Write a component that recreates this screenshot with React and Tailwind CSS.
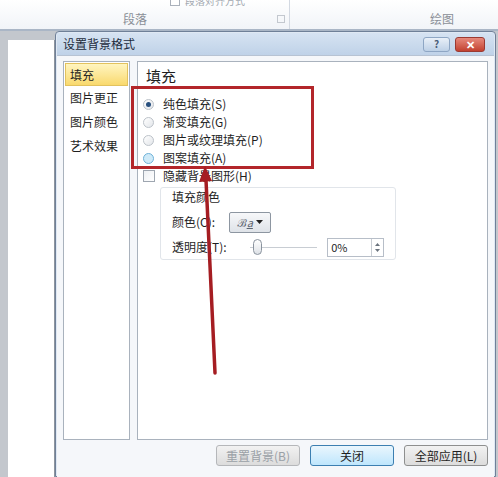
const font = { fontFamily: '"Noto Sans CJK SC", "Noto Sans", sans-serif' }

export default function App() {
  return (
    <div className="relative w-[498px] h-[477px] overflow-hidden bg-[#c3c7cd] text-[#1f1f1f]" style={font}>
      <Ribbon />
      <div className="flex h-[446px]">
        <div className="w-[55px] pl-[8px] pt-[9px]">
          <div className="h-full bg-white border-r border-[#8d949e]" />
        </div>
        <Dialog />
      </div>
      <Annotation />
    </div>
  )
}

function Ribbon() {
  return (
    <div className="flex h-[31px] bg-gradient-to-b from-white to-[#f1f4f8] border-b-2 border-[#aab6c6]">
      <div className="relative w-[290px] border-r border-[#d3d9e2]">
        <div className="absolute left-[170px] top-[-5px] flex items-center gap-[5px] text-[10px] leading-[12px] text-[#a3a9b1]">
          <span className="w-[10px] h-[10px] border border-[#aab1bb] bg-white" />
          <span>段落对齐方式</span>
        </div>
        <div className="flex items-center h-full pt-[8px]">
          <span className="ml-[123px] text-[12px] text-[#8a8f97]">段落</span>
          <span className="ml-auto mr-[4px] w-[8px] h-[8px] border border-[#c3c8cf]" />
        </div>
      </div>
      <div className="flex-1 flex items-center pt-[8px]">
        <span className="ml-[140px] text-[12px] text-[#8a8f97]">绘图</span>
      </div>
    </div>
  )
}

function Dialog() {
  return (
    <div className="w-[441px] border border-[#6f8098] rounded-t-[4px] bg-[#dfe8f3] pt-[1px] px-[1px]">
      <div className="flex items-center h-[22px] px-[6px] bg-gradient-to-b from-[#d6e3f2] to-[#bfd2e8]">
        <span className="text-[12px] text-[#1d2b3c]">设置背景格式</span>
        <div className="ml-auto flex gap-[5px] mr-[3px]">
          <div className="w-[27px] h-[15px] rounded-[3px] border border-[#8ea6c4] bg-gradient-to-b from-[#e9f0f8] to-[#bdd0e6] flex items-center justify-center text-[10px] font-bold text-[#4a5d78] leading-none">?</div>
          <div className="w-[30px] h-[15px] rounded-[3px] border border-[#9b3a32] bg-gradient-to-b from-[#e6897c] to-[#c2402f] flex items-center justify-center text-[11px] font-bold text-white leading-none">✕</div>
        </div>
      </div>
      <div className="h-[424px] bg-[#f5f7fa] border-t border-[#b7c3d3] px-[6px] pt-[5px]">
        <div className="flex gap-[7px] h-[379px]">
          <NavPanel />
          <FillPanel />
        </div>
        <div className="flex justify-end gap-[10px] mt-[5px]">
          <Btn label="重置背景(B)" disabled />
          <Btn label="关闭" primary />
          <Btn label="全部应用(L)" />
        </div>
      </div>
    </div>
  )
}

function NavPanel() {
  const items = ['图片更正', '图片颜色', '艺术效果']
  return (
    <div className="w-[67px] bg-white border border-[#a9b2bd] p-[1px]">
      <div className="h-[23px] flex items-center px-[4px] text-[12px] border border-[#e2c25e] bg-gradient-to-b from-[#fff5bf] to-[#f9d96c]">填充</div>
      {items.map((t) => (
        <div key={t} className="h-[24px] flex items-center px-[5px] text-[12px] first:mt-[4px]">{t}</div>
      ))}
    </div>
  )
}

function Radio({ label, checked, hover }) {
  return (
    <div className="flex items-center h-[18px] gap-[9px]">
      <span
        className={
          'w-[11px] h-[11px] rounded-full border flex items-center justify-center ' +
          (hover ? 'border-[#6fb2d8] bg-[#cfeaf8]' : 'border-[#bcc2c9] bg-gradient-to-br from-white to-[#e3e6ea]')
        }
      >
        {checked && <span className="w-[5px] h-[5px] rounded-full bg-[#29507e]" />}
      </span>
      <span className="text-[12px]">{label}</span>
    </div>
  )
}

function FillPanel() {
  return (
    <div className="flex-1 bg-white border border-[#a9b2bd] pl-[5px] pt-[4px]">
      <div className="text-[15px] leading-[20px] ml-[3px]">填充</div>
      <div className="mt-[9px]">
        <Radio label="纯色填充(S)" checked />
        <Radio label="渐变填充(G)" />
        <Radio label="图片或纹理填充(P)" />
        <Radio label="图案填充(A)" hover />
      </div>
      <div className="flex items-center h-[18px] gap-[8px]">
        <span className="w-[12px] h-[12px] border border-[#9ea6b0] bg-gradient-to-br from-[#eef0f3] to-white" />
        <span className="text-[12px]">隐藏背景图形(H)</span>
      </div>
      <div className="ml-[17px] mt-[2px] w-[236px] h-[73px] border border-[#e1e5ea] rounded-[3px] px-[11px] pt-[1px]">
        <div className="text-[12px] leading-[16px]">填充颜色</div>
        <div className="flex items-center h-[24px] mt-[5px]">
          <span className="text-[12px] w-[57px]">颜色(C):</span>
          <div className="w-[42px] h-[21px] rounded-[2px] border border-[#8d96a1] bg-gradient-to-b from-[#f7f8fa] to-[#dfe3e8] flex items-center justify-center gap-[3px]">
            <span className="text-[11px] text-[#5b6470] italic leading-none">ℬ<span className="underline">a</span></span>
            <svg width="7" height="4" viewBox="0 0 7 4"><polygon points="0,0 7,0 3.5,4" fill="#222" /></svg>
          </div>
        </div>
        <div className="flex items-center h-[22px] mt-[2px]">
          <span className="text-[12px] w-[78px]">透明度(T):</span>
          <div className="relative w-[68px] h-[16px] flex items-center">
            <div className="w-full h-[1px] bg-[#c8cdd3]" />
            <span className="absolute left-[3px] top-0 w-[9px] h-[16px] rounded-[5px] border border-[#8a939e] bg-gradient-to-b from-white to-[#dde1e6]" />
          </div>
          <div className="ml-[10px] w-[57px] h-[19px] border border-[#b7bec8] flex items-center">
            <span className="flex-1 pl-[3px] text-[11px]">0%</span>
            <span className="w-[12px] h-full border-l border-[#c8cdd3] flex flex-col items-center justify-center gap-[3px]">
              <svg width="5" height="3" viewBox="0 0 5 3"><polygon points="0,3 5,3 2.5,0" fill="#6a737d" /></svg>
              <svg width="5" height="3" viewBox="0 0 5 3"><polygon points="0,0 5,0 2.5,3" fill="#6a737d" /></svg>
            </span>
          </div>
        </div>
      </div>
    </div>
  )
}

function Btn({ label, primary, disabled }) {
  return (
    <div
      className={
        'w-[84px] h-[21px] rounded-[3px] border flex items-center justify-center text-[12px] ' +
        (primary
          ? 'border-[#3c7fb1] bg-gradient-to-b from-[#eaf6fd] to-[#bee6fd]'
          : 'border-[#8e8f8f] bg-gradient-to-b from-[#f2f2f2] to-[#dcdcdc]') +
        (disabled ? ' text-[#9aa0a6] border-[#b5b7ba]' : '')
      }
    >
      {label}
    </div>
  )
}

function Annotation() {
  return (
    <>
      <div className="absolute left-[131px] top-[86px] w-[183px] h-[83px] border-[3px] border-[#b3262a]" />
      <svg className="absolute left-0 top-0" width="498" height="477">
        <line x1="215" y1="373" x2="206" y2="180" stroke="#a51d22" strokeWidth="3.5" strokeLinecap="round" />
        <polygon points="205,166 199,182 212,181" fill="#a51d22" />
      </svg>
    </>
  )
}
